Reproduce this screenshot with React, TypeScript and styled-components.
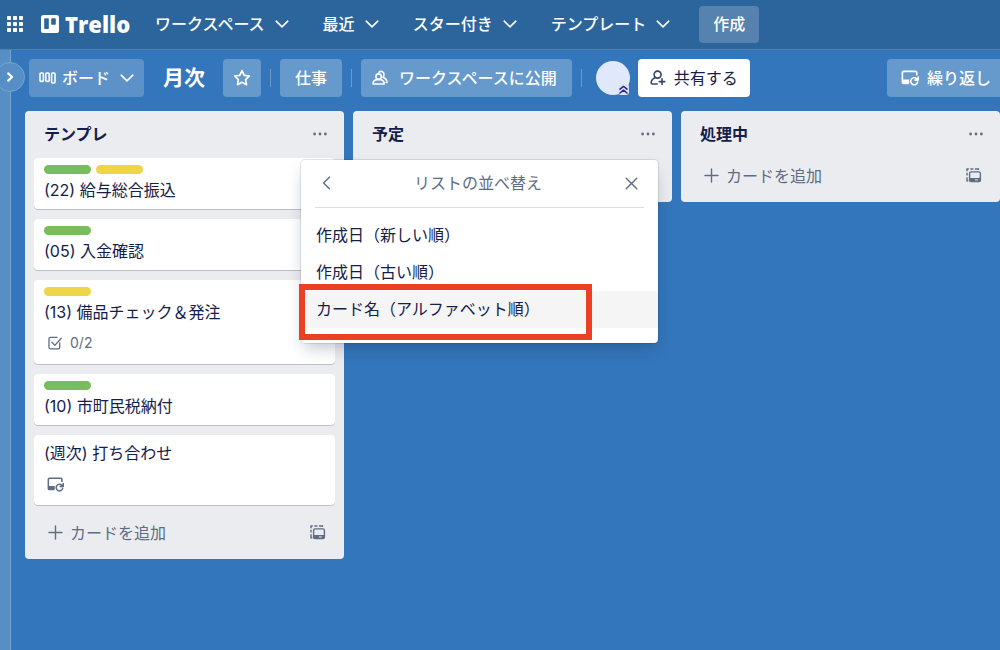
import React from "react";
import styled, { createGlobalStyle } from "styled-components";

const GlobalStyle = createGlobalStyle`
  *, *::before, *::after { box-sizing: border-box; }
  body {
    margin: 0;
    font-family: Inter, "Noto Sans CJK JP", sans-serif;
    font-size: 16px;
    line-height: 22px;
    color: #14204a;
    background: #3476bb;
  }
  button {
    font: inherit;
    color: inherit;
    border: 0;
    padding: 0;
    background: none;
    cursor: pointer;
    white-space: nowrap;
  }
  h1, h2, h3, p, ul { margin: 0; padding: 0; }
  ul { list-style: none; }
  svg { display: block; flex: none; }
`;

const Page = styled.div`
  display: flex;
  flex-direction: column;
  min-height: 100vh;
  overflow: hidden;
`;

const TopBar = styled.header`
  display: flex;
  align-items: center;
  height: 50px;
  padding: 0 7px 1px;
  color: #fff;
  background: #2c659b;
  border-bottom: 1px solid #4f80ae;
`;

const Logo = styled.a`
  display: flex;
  align-items: center;
  gap: 6px;
  width: 88px;
  margin: 0 26px 0 18px;
  color: #fff;
  font-family: "Open Sans", sans-serif;
  font-size: 22px;
  font-weight: 800;
  line-height: 30px;
  text-decoration: none;
`;

const Nav = styled.nav`
  display: flex;
  gap: 34px;
  margin-right: 29px;
`;

const NavItem = styled.button`
  display: flex;
  align-items: center;
  gap: 10px;
  font-weight: 500;
`;

const CreateButton = styled.button`
  height: 37px;
  padding: 0 14px;
  border-radius: 4px;
  font-weight: 500;
  background: #5682af;
`;

const Workspace = styled.div`
  display: flex;
  flex: 1;
`;

const SideRail = styled.aside`
  position: relative;
  flex: 0 0 11px;
  background: #568fc6;
  border-right: 1px solid #76a3d0;
`;

const ExpandButton = styled.button`
  position: absolute;
  top: 12px;
  left: -5px;
  display: flex;
  align-items: center;
  justify-content: center;
  width: 30px;
  height: 30px;
  border: 1px solid #76a3d0;
  border-radius: 50%;
  color: #fff;
  background: #568fc6;
`;

const Board = styled.main`
  flex: 1;
  min-width: 0;
`;

const BoardBar = styled.div`
  display: flex;
  align-items: center;
  height: 56px;
  padding-left: 18px;
  color: #fff;
`;

const BarButton = styled.button<{ $pad?: number; $gap?: number }>`
  display: flex;
  align-items: center;
  gap: ${(p) => p.$gap ?? 8}px;
  height: 38px;
  padding: 0 ${(p) => p.$pad ?? 10}px;
  border-radius: 4px;
  font-weight: 500;
  background: #6699cc;
`;

const ViewButton = styled(BarButton)`
  background: #5d92c8;
`;

const ViewName = styled.span`
  margin-right: 4px;
`;

const VisibilityButton = styled(BarButton)`
  padding: 0 15px 0 11px;
`;

const ShareButton = styled(BarButton)`
  color: #14204a;
  font-weight: 400;
  background: #fff;
  svg { color: #344563; }
`;

const RepeatButton = styled(BarButton)`
  margin-left: auto;
  padding: 0 9px 0 14px;
  border-radius: 4px 0 0 4px;
`;

const BoardTitle = styled.h1`
  margin: 0 18px 0 19px;
  font-size: 21px;
  font-weight: 700;
  line-height: 28px;
`;

const Divider = styled.span`
  width: 1px;
  height: 18px;
  margin: 0 9px;
  background: #6b9acb;
`;

const Avatar = styled.div`
  position: relative;
  width: 34px;
  height: 34px;
  margin: 0 8px 0 5px;
  border-radius: 50%;
  background: #dfe9fb;
`;

const AdminMark = styled.span`
  position: absolute;
  right: 1px;
  bottom: 0;
  padding: 1px;
  border-radius: 3px;
  color: #2622a0;
  background: #dfe3ec;
`;

const Lists = styled.div`
  display: flex;
  align-items: flex-start;
  gap: 9px;
  padding: 5px 0 20px 14px;
`;

const List = styled.section`
  position: relative;
  flex: 0 0 319px;
  padding: 0 9px;
  border-radius: 4px;
  background: #ebecf0;
`;

const ListHeader = styled.div`
  display: flex;
  align-items: center;
  justify-content: space-between;
  height: 47px;
  padding: 0 8px 2px 10px;
  h2 {
    font-size: 16px;
    font-weight: 700;
  }
`;

const IconButton = styled.button`
  color: #5e6c84;
`;

const Card = styled.li`
  margin-bottom: 9px;
  padding: 7px 10px 9px;
  border-radius: 4px;
  background: #fff;
  box-shadow: inset 0 -1px 0 #b9bfcd;
`;

const Labels = styled.div`
  display: flex;
  gap: 5px;
  margin-bottom: 5px;
`;

const Label = styled.span<{ $color: string }>`
  width: 47px;
  height: 9px;
  border-radius: 5px;
  background: ${(p) => p.$color};
`;

const CardTitle = styled.h3`
  font-size: 16px;
  font-weight: 400;
`;

const Badges = styled.div`
  display: flex;
  align-items: center;
  gap: 7px;
  height: 20px;
  margin: 10px 0 3px 3px;
  color: #5e6c84;
  font-size: 14px;
`;

const ListFooter = styled.div`
  display: flex;
  align-items: center;
  justify-content: space-between;
  height: 44px;
  padding: 0 9px 9px 14px;
  color: #5e6c84;
`;

const AddCard = styled.button`
  display: flex;
  align-items: center;
  gap: 7px;
`;

const Popover = styled.div`
  position: absolute;
  z-index: 2;
  top: 49px;
  left: 276px;
  width: 357px;
  padding-bottom: 15px;
  border-radius: 4px;
  background: #fff;
  box-shadow: 0 8px 16px -4px rgba(9, 30, 66, 0.28), 0 0 0 1px rgba(9, 30, 66, 0.1);
`;

const PopoverHeader = styled.div`
  display: flex;
  align-items: center;
  justify-content: space-between;
  height: 48px;
  margin: 0 14px 9px;
  padding: 0 6px 1px 7px;
  border-bottom: 1px solid #dadde3;
  color: #5e6c84;
  h2 {
    font-size: 16px;
    font-weight: 400;
  }
`;

const SortOption = styled.button<{ $active?: boolean }>`
  display: block;
  width: 100%;
  height: 37px;
  padding: 0 15px 2px;
  text-align: left;
  background: ${(p) => (p.$active ? "#f5f5f6" : "#fff")};
`;

const Highlight = styled.div`
  position: absolute;
  top: 124px;
  left: -2px;
  width: 293px;
  height: 56px;
  border: 6px solid #ec4024;
  pointer-events: none;
`;

const GridIcon = () => (
  <svg width="16" height="16" viewBox="0 0 16 16" fill="currentColor">
    {[0, 6, 12].map((y) =>
      [0, 6, 12].map((x) => <rect key={`${x}-${y}`} x={x} y={y} width="4" height="4" rx="0.8" />)
    )}
  </svg>
);

const LogoMark = () => (
  <svg width="18" height="18" viewBox="0 0 18 18">
    <rect width="18" height="18" rx="2.6" fill="#fff" />
    <rect x="3.2" y="3.2" width="4.6" height="10.8" rx="0.8" fill="#2c659b" />
    <rect x="10.2" y="3.2" width="4.6" height="6.6" rx="0.8" fill="#2c659b" />
  </svg>
);

const Stroke = ({
  w = 16,
  h = 16,
  width = 1.6,
  children,
}: {
  w?: number;
  h?: number;
  width?: number;
  children: React.ReactNode;
}) => (
  <svg
    width={w}
    height={h}
    viewBox={`0 0 ${w} ${h}`}
    fill="none"
    stroke="currentColor"
    strokeWidth={width}
    strokeLinecap="round"
    strokeLinejoin="round"
  >
    {children}
  </svg>
);

const ChevronDown = () => (
  <Stroke w={14} h={8}>
    <path d="M1.2 1.2 7 6.8l5.8-5.6" />
  </Stroke>
);

const ExpandIcon = () => (
  <Stroke w={8} h={10} width={2.2}>
    <path d="M2.2 1.4 6 5 2.2 8.6" />
  </Stroke>
);

const BoardIcon = () => (
  <Stroke w={17} h={12} width={1.6}>
    <rect x="1" y="1" width="3.4" height="8.4" rx="1" />
    <rect x="6.8" y="1" width="3.4" height="8.4" rx="1" />
    <rect x="12.6" y="1" width="3.4" height="10" rx="1" />
  </Stroke>
);

const StarIcon = () => (
  <Stroke w={18} h={18} width={1.7}>
    <path d="m9 1.6 2.2 4.7 5.1.7-3.7 3.6.9 5.1L9 13.2l-4.5 2.5.9-5.1L1.7 7l5.1-.7z" />
  </Stroke>
);

const PeopleIcon = () => (
  <Stroke w={17} h={16} width={1.6}>
    <circle cx="6.6" cy="6.6" r="2.7" />
    <path d="M1 14c0-2.5 1.600-3.900 3.600-4.400h4c2 .5 3.600 1.900 3.600 4.400z" />
    <path d="M7 2.300c1.600-1.600 4.800-.9 5 1.900.1 1.300-.4 2.300-1.100 3 2.400.8 4.100 2.500 4.100 5.300h-1" />
  </Stroke>
);

const AddPersonIcon = () => (
  <Stroke w={16} h={16} width={1.6}>
    <circle cx="7.6" cy="4.6" r="3.5" />
    <path d="M5.600 7.600C3 8.600 1.200 10.600 1.200 12.800c0 .7.4 1.200 1.200 1.200h4.800" />
    <path d="M12 8.800v5.600M9.200 11.600h5.600" />
  </Stroke>
);

const RepeatCardIcon = ({ size = 18 }: { size?: number }) => (
  <svg
    width={size}
    height={size}
    viewBox="0 0 18 18"
    fill="none"
    stroke="currentColor"
    strokeWidth="1.6"
    strokeLinejoin="round"
  >
    <path d="M15.800 6.400V3.600a1.200 1.200 0 0 0-1.200-1.200H2.600a1.200 1.200 0 0 0-1.200 1.200v9.600a1.200 1.200 0 0 0 1.200 1.200h5.200" />
    <path d="M1.400 10.600h6.800v3.800H2.600a1.200 1.200 0 0 1-1.200-1.200z" fill="currentColor" stroke="none" />
    <path d="M15.800 9.900a3.500 3.500 0 1 0 .8 3.200M17.200 8v3.100h-3.200" strokeLinecap="round" />
  </svg>
);

const AdminIcon = () => (
  <Stroke w={9} h={9} width={1.5}>
    <path d="m1 4.200 3.500-2.800L8 4.200M1 8l3.500-2.800L8 8" />
  </Stroke>
);

const DotsIcon = () => (
  <svg width="14" height="4" viewBox="0 0 14 4" fill="currentColor">
    <circle cx="1.6" cy="2" r="1.4" />
    <circle cx="7" cy="2" r="1.4" />
    <circle cx="12.4" cy="2" r="1.4" />
  </svg>
);

const PlusIcon = () => (
  <Stroke w={15} h={15} width={1.4}>
    <path d="M7.500 1v13M1 7.500h13" />
  </Stroke>
);

const TemplateIcon = () => (
  <svg width="16" height="15" viewBox="0 0 16 15" fill="none" stroke="currentColor" strokeWidth="1.4">
    <path d="M1 3.300V1h1.800M4.400 1h3M9 1h3.400v1M1 4.800v2.800M1 9.200v3.500h1.300" />
    <rect x="3.6" y="3.9" width="10.8" height="9.700" rx="1.5" />
    <path d="M3.600 10h10.800v2.400a1.200 1.200 0 0 1-1.200 1.200H4.800a1.200 1.200 0 0 1-1.200-1.200z" fill="currentColor" stroke="none" />
    <path d="M9 11.900h2.800" stroke="#ebecf0" strokeWidth="1" />
  </svg>
);

const CheckIcon = () => (
  <Stroke w={16} h={14} width={1.3}>
    <path d="M12.700 7v4.400a1.400 1.400 0 0 1-1.400 1.400H3.400A1.400 1.400 0 0 1 2 11.400V2.800a1.400 1.400 0 0 1 1.400-1.400H10" />
    <path d="m4.900 6.200 3 3.200 6.300-7.200" />
  </Stroke>
);

const BackIcon = () => (
  <Stroke w={9} h={14} width={1.4}>
    <path d="M7.400 1.200 1.600 7l5.800 5.800" />
  </Stroke>
);

const CloseIcon = () => (
  <Stroke w={13} h={13} width={1.4}>
    <path d="m1.200 1.200 10.600 10.600M11.800 1.200 1.200 11.800" />
  </Stroke>
);

const GREEN = "#78bc5e";
const YELLOW = "#eed648";

type CardData = { title: string; labels: string[]; badge?: "checklist" | "repeat" };

const cards: CardData[] = [
  { title: "(22) 給与総合振込", labels: [GREEN, YELLOW] },
  { title: "(05) 入金確認", labels: [GREEN] },
  { title: "(13) 備品チェック＆発注", labels: [YELLOW], badge: "checklist" },
  { title: "(10) 市町民税納付", labels: [GREEN] },
  { title: "(週次) 打ち合わせ", labels: [], badge: "repeat" },
];

const lists: { name: string; cards: CardData[]; canAdd: boolean }[] = [
  { name: "テンプレ", cards, canAdd: true },
  { name: "予定", cards: [], canAdd: false },
  { name: "処理中", cards: [], canAdd: true },
];

const navItems = ["ワークスペース", "最近", "スター付き", "テンプレート"];
const sortOptions = ["作成日（新しい順）", "作成日（古い順）", "カード名（アルファベット順）"];

const CardItem = ({ card }: { card: CardData }) => (
  <Card>
    {card.labels.length > 0 && (
      <Labels>
        {card.labels.map((c) => (
          <Label key={c} $color={c} />
        ))}
      </Labels>
    )}
    <CardTitle>{card.title}</CardTitle>
    {card.badge === "checklist" && (
      <Badges>
        <CheckIcon />
        0/2
      </Badges>
    )}
    {card.badge === "repeat" && (
      <Badges>
        <RepeatCardIcon size={17} />
      </Badges>
    )}
  </Card>
);

const SortMenu = () => (
  <Popover role="dialog" aria-labelledby="sort-title">
    <PopoverHeader>
      <IconButton aria-label="戻る">
        <BackIcon />
      </IconButton>
      <h2 id="sort-title">リストの並べ替え</h2>
      <IconButton aria-label="閉じる">
        <CloseIcon />
      </IconButton>
    </PopoverHeader>
    <ul>
      {sortOptions.map((option, i) => (
        <li key={option}>
          <SortOption $active={i === 2}>{option}</SortOption>
        </li>
      ))}
    </ul>
    <Highlight />
  </Popover>
);

export default function App() {
  return (
    <Page>
      <GlobalStyle />
      <TopBar>
        <button aria-label="アプリ">
          <GridIcon />
        </button>
        <Logo href="#">
          <LogoMark />
          Trello
        </Logo>
        <Nav>
          {navItems.map((item) => (
            <NavItem key={item}>
              {item}
              <ChevronDown />
            </NavItem>
          ))}
        </Nav>
        <CreateButton>作成</CreateButton>
      </TopBar>
      <Workspace>
        <SideRail>
          <ExpandButton aria-label="サイドバーを開く">
            <ExpandIcon />
          </ExpandButton>
        </SideRail>
        <Board>
          <BoardBar>
            <ViewButton $gap={6}>
              <BoardIcon />
              <ViewName>ボード</ViewName>
              <ChevronDown />
            </ViewButton>
            <BoardTitle>月次</BoardTitle>
            <BarButton aria-label="スター">
              <StarIcon />
            </BarButton>
            <Divider />
            <BarButton $pad={15}>仕事</BarButton>
            <Divider />
            <VisibilityButton $gap={10}>
              <PeopleIcon />
              ワークスペースに公開
            </VisibilityButton>
            <Divider />
            <Avatar>
              <AdminMark>
                <AdminIcon />
              </AdminMark>
            </Avatar>
            <ShareButton $pad={12}>
              <AddPersonIcon />
              共有する
            </ShareButton>
            <RepeatButton>
              <RepeatCardIcon />
              繰り返し
            </RepeatButton>
          </BoardBar>
          <Lists>
            {lists.map((list, i) => (
              <List key={list.name}>
                <ListHeader>
                  <h2>{list.name}</h2>
                  <IconButton aria-label="リスト操作">
                    <DotsIcon />
                  </IconButton>
                </ListHeader>
                <ul>
                  {list.cards.map((card) => (
                    <CardItem key={card.title} card={card} />
                  ))}
                </ul>
                <ListFooter>
                  {list.canAdd && (
                    <>
                      <AddCard>
                        <PlusIcon />
                        カードを追加
                      </AddCard>
                      <IconButton aria-label="テンプレートから作成">
                        <TemplateIcon />
                      </IconButton>
                    </>
                  )}
                </ListFooter>
                {i === 0 && <SortMenu />}
              </List>
            ))}
          </Lists>
        </Board>
      </Workspace>
    </Page>
  );
}
